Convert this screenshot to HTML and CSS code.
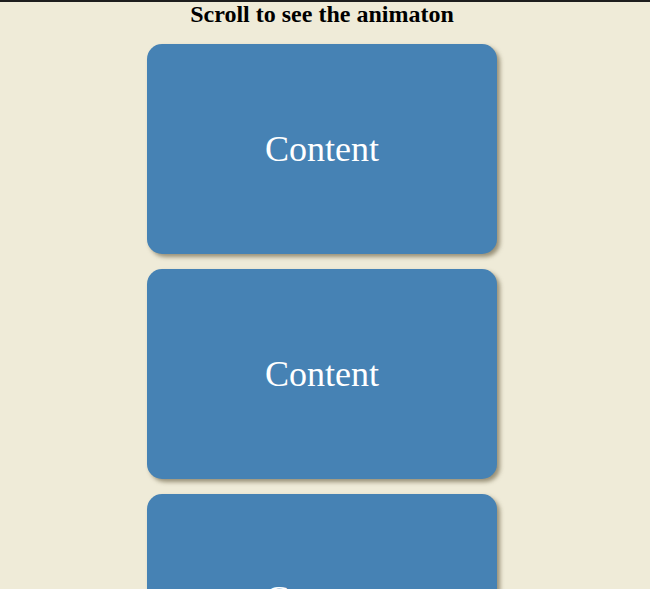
FILE: index.html
```html
<!DOCTYPE html>
<html>
<head>
<meta charset="utf-8">
<link rel="stylesheet" href="styles.css">
</head>
<body>
<div class="topbar"></div>
<div class="page">
  <h1 class="title">Scroll to see the animaton</h1>
  <div class="list">
    <div class="card">Content</div>
    <div class="card">Content</div>
    <div class="card">Content</div>
  </div>
</div>
</body>
</html>
```
FILE: styles.css
```css
html, body {
  margin: 0;
  padding: 0;
  background: #efebd8;
  font-family: "Liberation Serif", serif;
}
body {
  overflow: hidden;
  height: 589px;
}
.topbar {
  height: 2px;
  background: #1e1e1e;
}
.page {
  width: 644px;
}
.title {
  margin: 0;
  height: 42px;
  font-size: 24px;
  line-height: 24px;
  text-align: center;
  font-weight: bold;
  color: #000;
}
.list {
  display: flex;
  flex-direction: column;
  align-items: center;
  gap: 15px;
}
.card {
  width: 350px;
  height: 210px;
  border-radius: 15px;
  background: #4682b4;
  box-shadow: 3px 3px 4px rgba(80, 70, 40, 0.55);
  color: #fff;
  font-size: 36px;
  padding-top: 0;
  box-sizing: border-box;
  display: flex;
  align-items: center;
  justify-content: center;
  flex-shrink: 0;
}
```
